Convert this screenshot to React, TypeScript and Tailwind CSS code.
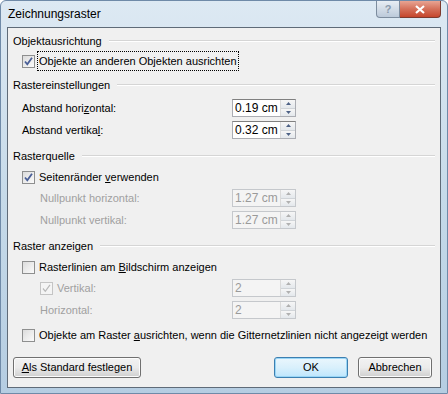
import React from "react";

const font = { fontFamily: '"Liberation Sans", Arial, sans-serif' };

function Heading({ text, mt }: { text: string; mt: string }) {
  return (
    <div className={`flex items-center h-[18px] pl-[5px] pr-[5px] ${mt}`}>
      <span className="whitespace-nowrap">{text}</span>
      <div className="flex-1 ml-[7px] h-[2px] border-t border-[#d5d5d5] border-b border-b-white" />
    </div>
  );
}

function Check({ checked, disabled }: { checked?: boolean; disabled?: boolean }) {
  return (
    <div
      className={`w-[13px] h-[13px] shrink-0 border flex items-center justify-center ${
        disabled ? "border-[#c4c4c4] bg-[#f4f4f4]" : "border-[#8e8f8f] bg-gradient-to-br from-[#dcdcdc] to-[#fbfbfb]"
      }`}
    >
      {checked && (
        <svg width="11" height="11" viewBox="0 0 11 11">
          <path
            d="M2 5.5 L4.3 8.3 L9 1.8"
            fill="none"
            stroke={disabled ? "#b8b8b8" : "#4a5f97"}
            strokeWidth={disabled ? 1.2 : 1.8}
          />
        </svg>
      )}
    </div>
  );
}

function Spin({ value, disabled }: { value: string; disabled?: boolean }) {
  return (
    <div
      className={`w-[64px] h-[18px] flex border text-[12px] ${
        disabled ? "border-[#c5c8cc] bg-[#f4f4f4] text-[#9a9a9a]" : "border-[#abadb3] border-t-[#808080] bg-white text-black"
      }`}
    >
      <div className="flex-1 pl-[2px] flex items-center leading-none">{value}</div>
      <div className="w-[15px] flex flex-col border-l border-[#dadada]">
        <div className="flex-1 flex items-center justify-center bg-gradient-to-b from-[#f6f6f6] to-[#e4e8ec] border-b border-[#d0d4d8]">
          <svg width="5" height="3" viewBox="0 0 5 3">
            <path d="M0 3 L2.5 0 L5 3 Z" fill={disabled ? "#b0b0b0" : "#4d6185"} />
          </svg>
        </div>
        <div className="flex-1 flex items-center justify-center bg-gradient-to-b from-[#f6f6f6] to-[#e4e8ec]">
          <svg width="5" height="3" viewBox="0 0 5 3">
            <path d="M0 0 L2.5 3 L5 0 Z" fill={disabled ? "#b0b0b0" : "#4d6185"} />
          </svg>
        </div>
      </div>
    </div>
  );
}

function SpinRow({
  label,
  value,
  mt,
  indent,
  disabled,
  check,
}: {
  label: React.ReactNode;
  value: string;
  mt: string;
  indent: string;
  disabled?: boolean;
  check?: boolean;
}) {
  return (
    <div className={`flex items-center h-[18px] ${mt}`}>
      <div className={`w-[224px] flex items-center gap-[4px] ${indent} ${disabled ? "text-[#a0a0a0]" : ""}`}>
        {check && <Check checked disabled />}
        <span className="whitespace-nowrap">{label}</span>
      </div>
      <Spin value={value} disabled={disabled} />
    </div>
  );
}

function CheckRow({ children, checked, mt, focus }: { children: React.ReactNode; checked?: boolean; mt: string; focus?: boolean }) {
  return (
    <div className={`flex items-center h-[18px] pl-[14px] gap-[3px] ${mt}`}>
      <Check checked={checked} />
      <span className={`whitespace-nowrap px-[1px] ${focus ? "outline outline-1 outline-dotted outline-black py-[1px]" : ""}`}>
        {children}
      </span>
    </div>
  );
}

function Btn({ children, w, def }: { children: React.ReactNode; w: string; def?: boolean }) {
  return (
    <div
      className={`${w} h-[21px] rounded-[3px] border flex items-center justify-center ${
        def
          ? "border-[#3c7fb1] bg-gradient-to-b from-[#eaf6fd] via-[#d9f0fc] to-[#bee6fd] shadow-[inset_0_0_0_1px_#9ad6f6]"
          : "border-[#707070] bg-gradient-to-b from-[#f2f2f2] via-[#ebebeb] to-[#cfcfcf] shadow-[inset_0_0_0_1px_#fcfcfc]"
      }`}
    >
      {children}
    </div>
  );
}

export default function App() {
  return (
    <div
      className="w-[448px] h-[394px] flex flex-col border border-[#6f8aa8] rounded-t-[6px] bg-gradient-to-b from-[#dde9f3] via-[#c6dae9] to-[#b5cde2] text-[11px] text-black overflow-hidden"
      style={font}
    >
      <div className="h-[26px] flex items-start shrink-0">
        <div className="pl-[7px] pt-[7px] flex-1 leading-none text-[12px]">Zeichnungsraster</div>
        <div className="flex mr-[6px]">
          <div className="w-[24px] h-[17px] border border-[#7c8c9e] border-t-0 rounded-bl-[4px] bg-gradient-to-b from-[#e8eef4] to-[#bccada] flex items-center justify-center text-[#8a9aac] text-[11px] font-bold leading-none">
            ?
          </div>
          <div className="w-[41px] h-[17px] border border-[#7d3a2e] border-t-0 border-l-0 rounded-br-[4px] bg-gradient-to-b from-[#e8a493] via-[#d4705a] to-[#c5452b] flex items-center justify-center">
            <svg width="10" height="9" viewBox="0 0 10 9">
              <path d="M1 1 L9 8 M9 1 L1 8" stroke="#ffffff" strokeWidth="2.2" />
            </svg>
          </div>
        </div>
      </div>
      <div className="mx-[6px] h-[361px] border border-[#5f6b78] bg-[#f0f0f0] flex flex-col pt-[4px]">
        <Heading text="Objektausrichtung" mt="" />
        <CheckRow checked focus mt="mt-[2px]">
          Objekte an anderen Objekten ausrichten
        </CheckRow>
        <Heading text="Rastereinstellungen" mt="mt-[6px]" />
        <SpinRow
          label={
            <>
              Abstand hori<u>z</u>ontal:
            </>
          }
          value="0.19 cm"
          mt="mt-[5px]"
          indent="pl-[14px]"
        />
        <SpinRow
          label={
            <>
              Abstand vertika<u>l</u>:
            </>
          }
          value="0.32 cm"
          mt="mt-[4px]"
          indent="pl-[14px]"
        />
        <Heading text="Rasterquelle" mt="mt-[8px]" />
        <CheckRow checked mt="mt-[3px]">
          Seitenränder <u>v</u>erwenden
        </CheckRow>
        <SpinRow label="Nullpunkt horizontal:" value="1.27 cm" mt="mt-[3px]" indent="pl-[32px]" disabled />
        <SpinRow label="Nullpunkt vertikal:" value="1.27 cm" mt="mt-[4px]" indent="pl-[32px]" disabled />
        <Heading text="Raster anzeigen" mt="mt-[8px]" />
        <CheckRow mt="mt-[3px]">
          Rasterlinien am <u>B</u>ildschirm anzeigen
        </CheckRow>
        <SpinRow label="Vertikal:" value="2" mt="mt-[3px]" indent="pl-[32px]" disabled check />
        <SpinRow label="Horizontal:" value="2" mt="mt-[4px]" indent="pl-[32px]" disabled />
        <CheckRow mt="mt-[7px]">
          Objekte am Raster <u>a</u>usrichten, wenn die Gitternetzlinien nicht angezeigt werden
        </CheckRow>
        <div className="flex items-center mt-[13px] pl-[5px] pr-[8px]">
          <Btn w="w-[128px]">
            <u>A</u>ls Standard festlegen
          </Btn>
          <div className="flex-1" />
          <Btn w="w-[74px]" def>
            OK
          </Btn>
          <div className="w-[10px]" />
          <Btn w="w-[74px]">Abbrechen</Btn>
        </div>
      </div>
    </div>
  );
}
